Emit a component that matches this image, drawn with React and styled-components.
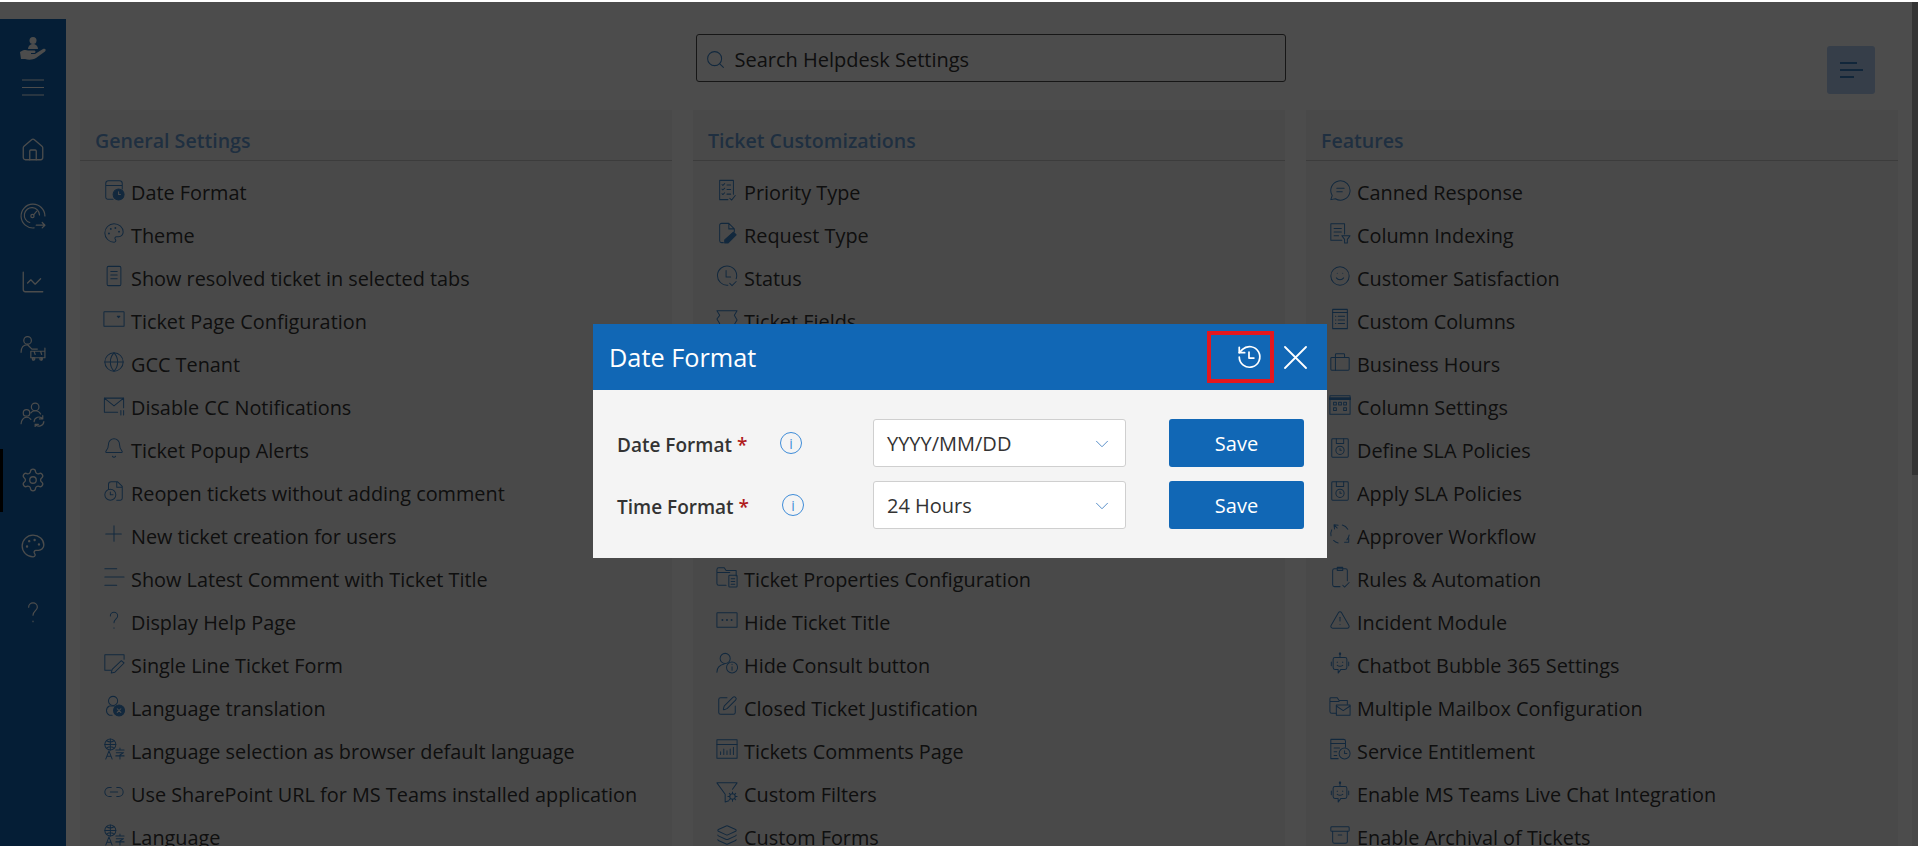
import React from "react";
import styled, { createGlobalStyle } from "styled-components";
import {
  Archive,
  Bell,
  ChartLine,
  ChevronDown,
  Globe,
  Home,
  Layers,
  Link2,
  Palette,
  Search,
  Settings,
  Smile,
  SquarePen,
  TriangleAlert,
} from "lucide-react";

const PRIMARY = "#1167b5";
const ICON_BLUE = "#3d86cc";

const Svg = ({ children, size = 22, sw = 1.1 }) => (
  <svg width={size} height={size} viewBox="0 0 24 24" fill="none" stroke="currentColor" strokeWidth={sw} strokeLinecap="round" strokeLinejoin="round">
    {children}
  </svg>
);

const DateIcon = () => (
  <Svg>
    <path d="M11 22H5a2 2 0 0 1-2-2V5a3 3 0 0 1 3-3h12a3 3 0 0 1 3 3v6M3 7h18" />
    <circle cx="17" cy="17" r="6" fill="currentColor" />
    <path d="M17 14v3h2" stroke="#fff" />
  </Svg>
);
const DocLines = () => (
  <Svg>
    <rect x="4.5" y="1.5" width="15" height="21" rx="1.5" />
    <path d="M8.5 7h7M8.5 11h7M8.5 15h7" />
  </Svg>
);
const PageConfig = () => (
  <Svg>
    <rect x="1" y="4" width="22" height="16" rx="0.5" />
    <path d="M15.5 9h3l-1.5 1.5z" fill="currentColor" />
  </Svg>
);
const MailPause = () => (
  <Svg>
    <path d="M16 20H1.5V4.5h21V15M1.5 4.5 12 13l10.5-8.5" />
    <path d="M19.5 18v5M22.5 18v5" />
  </Svg>
);
const FileLoop = () => (
  <Svg>
    <path d="M6 10V5a3 3 0 0 1 3-3h7l5 5v13a2 2 0 0 1-2 2h-4M15 2v6h6" />
    <circle cx="8" cy="16" r="6" />
    <path d="M8 13v3h3" />
  </Svg>
);
const ThinPlus = () => (
  <Svg>
    <path d="M12 3v17M3 12h17" />
  </Svg>
);
const LeftLines = () => (
  <Svg>
    <path d="M2 3h13M2 12h21M2 21h13" />
  </Svg>
);
const Question = ({ size = 22 }) => (
  <Svg size={size}>
    <path d="M8 7.5a4 4 0 0 1 8 0c0 3-4 3.5-4 7.5M12 20.5v.5" />
  </Svg>
);
const NotePen = () => (
  <Svg>
    <path d="M9 20H2V3h21v5" />
    <path d="M20 9.5 23 12 13 22l-4 1 1-4z" />
  </Svg>
);
const UserBadge = () => (
  <Svg>
    <circle cx="11" cy="6.5" r="5" />
    <path d="M10 22H7a5.5 5.5 0 0 1 0-10h6" />
    <circle cx="17.5" cy="17" r="6" fill="currentColor" />
    <path d="m15.5 15 4 4M19.5 15l-4 4" stroke="#fff" />
  </Svg>
);
const GlobeTranslate = () => (
  <Svg>
    <circle cx="8" cy="7" r="6" />
    <path d="M2 7h12M8 1v12M4 3c3 2 5 2 8 0M4 11c3-2 5-2 8 0" />
    <path d="m3 23 3.500-9 3.500 9M4.500 20h4" />
    <path d="M14 13h9M18.500 11v2M14.500 16h8l-4 2.500M14 19.500h9M18.500 18.500V23" />
  </Svg>
);
const Checklist = () => (
  <Svg>
    <path d="M13 22.5H4v-21h15v15" />
    <path d="m6.5 6 1 1 2-2M6.5 11l1 1 2-2M6.5 16l1 1 2-2M12 6.5h4M12 11.5h4M12 16.5h4M15 21l2 2 4-5" />
  </Svg>
);
const FileEdit = () => (
  <Svg>
    <path d="M8 22.5H6a2 2 0 0 1-2-2V3.500a2 2 0 0 1 2-2h8l6 6v3M14 1.500v6h6" />
    <path d="m19 11 3 3-9 9H9.500v-3.500z" fill="currentColor" />
  </Svg>
);
const ClockDone = () => (
  <Svg>
    <path d="M13 22a10.500 10.500 0 1 1 9-7" />
    <path d="M11 6v7h5M15 20l2.500 2.500L22 18" />
  </Svg>
);
const TicketShape = () => (
  <Svg>
    <path d="M1 3h22l-3 5 3 5-3 5 3 4H1l3-5-3-5 3-4z" />
  </Svg>
);
const FolderDoc = () => (
  <Svg>
    <path d="M11 21H3a2 2 0 0 1-2-2V4a2 2 0 0 1 2-2h6l2 3h11v6M1 7h14" />
    <rect x="14" y="10" width="9" height="13" rx="1" />
    <path d="M16.500 14h4M16.500 17h4M16.500 20h4" />
  </Svg>
);
const DotsBox = () => (
  <Svg>
    <rect x="1" y="4" width="22" height="16" rx="0.5" />
    <path d="M7 12v.01M12 12v.01M17 12v.01" strokeWidth="2.200" />
  </Svg>
);
const UserInfo = () => (
  <Svg>
    <circle cx="10" cy="7" r="5.500" />
    <path d="M1 22c0-5 3-8 8-9" />
    <circle cx="17.500" cy="17" r="6" />
    <path d="M17.500 16v4M17.500 13.500v.2" />
  </Svg>
);
const ChartWindow = () => (
  <Svg>
    <rect x="1" y="2" width="22" height="20" />
    <path d="M1 7h22M5 18v-3M8.500 18v-6M12 18v-4M15.500 18v-6M19 18v-8" />
  </Svg>
);
const FilterGear = () => (
  <Svg>
    <path d="M14 21.500 10 23v-8.500L1 2h22l-5 7" />
    <circle cx="18" cy="17" r="3" />
    <path d="M18 12v2M18 20v2M13 17h2M21 17h2M14.500 13.500l1.500 1.500M20 19l1.500 1.500M21.500 13.500 20 15M16 19l-1.500 1.500" />
  </Svg>
);
const Bubble = () => (
  <Svg>
    <path d="M2 22.500 3.500 18A10.500 10.500 0 1 1 7 21.500z" />
    <path d="M8.500 10h8M8.500 14h6" />
  </Svg>
);
const DocFilter = () => (
  <Svg>
    <path d="M14 20H2V2h15v11" />
    <path d="M5.500 7h8M5.500 11h8M5.500 15h5" />
    <path d="M14 15h9l-3 4v4h-3v-4z" />
  </Svg>
);
const DotDoc = () => (
  <Svg>
    <rect x="4" y="1.500" width="16" height="21" />
    <path d="M4 5h16M7 9h.5M10 9h7M7 13h.5M10 13h7M7 17h.5M10 17h7" />
  </Svg>
);
const Case = () => (
  <Svg>
    <rect x="2" y="7" width="20" height="14" rx="1" />
    <path d="M7 21V7M7 7V4a1 1 0 0 1 1-1h8a1 1 0 0 1 1 1v3" />
  </Svg>
);
const GridTable = () => (
  <Svg>
    <rect x="1" y="2" width="22" height="20" />
    <path d="M1 5h22" strokeWidth="3" />
    <path d="M5 9h3v3H5zM10.500 9h3v3h-3zM16 9h3v3h-3zM5 15h3v3H5zM16 15h3v3h-3z" />
  </Svg>
);
const SaveClock = () => (
  <Svg>
    <rect x="3" y="2" width="18" height="20" rx="1" />
    <path d="M8 2v5h8V2" />
    <circle cx="12" cy="14.500" r="4.500" />
    <path d="M12 12.500v2h1.500" />
  </Svg>
);
const DashedLoop = () => (
  <Svg>
    <path d="M14.500 2.300a10 10 0 0 1 6 4.500M22 13a10 10 0 0 1-2.500 5.500M10 21.800a10 10 0 0 1-5-2.800M2.200 14a10 10 0 0 1 .8-6.500" />
    <path d="M10 2.500 5.500 2l.5 4.500M5.500 2 9 5.500M17 21l4.500 0 0-4" />
  </Svg>
);
const ClipCheck = () => (
  <Svg>
    <path d="M12 22.500H6a2 2 0 0 1-2-2V5a2 2 0 0 1 2-2h12a2 2 0 0 1 2 2v11" />
    <path d="M9 5V1.500h6V5zM15 21l2 2 5-5" />
  </Svg>
);
const BotIcon = () => (
  <Svg>
    <path d="M12 1v5" />
    <circle cx="12" cy="2" r="0.800" fill="currentColor" />
    <path d="M6.500 6h11a2 2 0 0 1 2 2v9a2 2 0 0 1-2 2H13l-3 4v-4H6.500a2 2 0 0 1-2-2V8a2 2 0 0 1 2-2z" />
    <path d="M2.500 11v4M21.500 11v4M9 11v.5M15 11v.5M9 14.500c2 1.500 4 1.500 6 0" />
  </Svg>
);
const FolderMail = () => (
  <Svg>
    <path d="M8 20H3a2 2 0 0 1-2-2V4a1 1 0 0 1 1-1h7l2 3h9v4M1 7h10" />
    <rect x="8" y="11" width="15" height="11" />
    <path d="m8 12 7.500 5 7.500-5" />
  </Svg>
);
const DocClock = () => (
  <Svg>
    <path d="M10 22.500H2v-21h14a2 2 0 0 1 2 2V10" />
    <path d="M2 6h16M5.500 11h6M5.500 15h3M5.500 19h3" />
    <circle cx="17" cy="17" r="6" />
    <path d="M17 14v3h2.500" />
  </Svg>
);

const LogoIcon = () => (
  <svg width="27" height="26" viewBox="0 0 27 26" fill="currentColor">
    <circle cx="13" cy="4.500" r="3.500" />
    <path d="M8 13a5 5 0 0 1 10 0z" />
    <path d="M0 16c3-2.500 6-2.500 8-1.500h6c2 0 2 2.500 0 2.500h-3v1h4l8-5c2.500-1 3.500 1 2 2.500L16 22c-3 2-8 2-11 1H1z" />
  </svg>
);
const BurgerIcon = () => (
  <svg width="22" height="17" viewBox="0 0 22 17" stroke="currentColor" strokeWidth="1.100">
    <path d="M0 1h22M0 8.500h22M0 16h22" />
  </svg>
);
const GaugeIcon = () => (
  <Svg size={26}>
    <path d="M13 23A11 11 0 1 1 23 12" />
    <path d="M9 18a7 7 0 1 1 9-7" />
    <circle cx="11.500" cy="12" r="1.500" />
    <path d="m12.500 11 3-3.500M15 20.500h8M20.500 18l2.500 2.500-2.500 2.500" />
  </Svg>
);
const UserTrain = () => (
  <Svg size={26}>
    <circle cx="7" cy="5" r="3.500" />
    <path d="M1 16c0-4 2-7 6-7l4 4h5" />
    <path d="M10 15h13v6H10zM23 12v9M12 21v2M20 21v2M13 15l1 3M19 15l1 3" />
    <circle cx="12.500" cy="22" r="1.200" />
    <circle cx="19.500" cy="22" r="1.200" />
  </Svg>
);
const UsersRefresh = () => (
  <Svg size={26}>
    <circle cx="14" cy="5.500" r="3.500" />
    <circle cx="6" cy="11" r="3" />
    <path d="M1 21c0-3 2-6 5-6s3 1 4 2M10 11c1-1.500 2-2 4-2s4 1 5 3" />
    <path d="M13 19a4.500 4.500 0 0 1 8-2.500M22 19a4.500 4.500 0 0 1-8 2.500M21 13.500v3h-3M14 24v-2.500h3" />
  </Svg>
);

const NAV = [
  { icon: <Home size={26} strokeWidth={1.2} /> },
  { icon: <GaugeIcon /> },
  { icon: <ChartLine size={26} strokeWidth={1.2} /> },
  { icon: <UserTrain /> },
  { icon: <UsersRefresh /> },
  { icon: <Settings size={26} strokeWidth={1.2} />, active: true },
  { icon: <Palette size={26} strokeWidth={1.2} /> },
  { icon: <Question size={26} /> },
];

const lu = (Icon) => <Icon size={22} strokeWidth={1.1} />;

const GENERAL = [
  [<DateIcon />, "Date Format"],
  [lu(Palette), "Theme"],
  [<DocLines />, "Show resolved ticket in selected tabs"],
  [<PageConfig />, "Ticket Page Configuration"],
  [lu(Globe), "GCC Tenant"],
  [<MailPause />, "Disable CC Notifications"],
  [lu(Bell), "Ticket Popup Alerts"],
  [<FileLoop />, "Reopen tickets without adding comment"],
  [<ThinPlus />, "New ticket creation for users"],
  [<LeftLines />, "Show Latest Comment with Ticket Title"],
  [<Question />, "Display Help Page"],
  [<NotePen />, "Single Line Ticket Form"],
  [<UserBadge />, "Language translation"],
  [<GlobeTranslate />, "Language selection as browser default language"],
  [lu(Link2), "Use SharePoint URL for MS Teams installed application"],
  [<GlobeTranslate />, "Language"],
];

const TICKETS_TOP = [
  [<Checklist />, "Priority Type"],
  [<FileEdit />, "Request Type"],
  [<ClockDone />, "Status"],
  [<TicketShape />, "Ticket Fields"],
];

const TICKETS_BOTTOM = [
  [<FolderDoc />, "Ticket Properties Configuration"],
  [<DotsBox />, "Hide Ticket Title"],
  [<UserInfo />, "Hide Consult button"],
  [lu(SquarePen), "Closed Ticket Justification"],
  [<ChartWindow />, "Tickets Comments Page"],
  [<FilterGear />, "Custom Filters"],
  [lu(Layers), "Custom Forms"],
];

const FEATURES = [
  [<Bubble />, "Canned Response"],
  [<DocFilter />, "Column Indexing"],
  [lu(Smile), "Customer Satisfaction"],
  [<DotDoc />, "Custom Columns"],
  [<Case />, "Business Hours"],
  [<GridTable />, "Column Settings"],
  [<SaveClock />, "Define SLA Policies"],
  [<SaveClock />, "Apply SLA Policies"],
  [<DashedLoop />, "Approver Workflow"],
  [<ClipCheck />, "Rules & Automation"],
  [lu(TriangleAlert), "Incident Module"],
  [<BotIcon />, "Chatbot Bubble 365 Settings"],
  [<FolderMail />, "Multiple Mailbox Configuration"],
  [<DocClock />, "Service Entitlement"],
  [<BotIcon />, "Enable MS Teams Live Chat Integration"],
  [lu(Archive), "Enable Archival of Tickets"],
];

const SettingRows = ({ rows }) =>
  rows.map(([icon, label]) => (
    <Row key={label}>
      <RowIcon>{icon}</RowIcon>
      {label}
    </Row>
  ));

const FormatRow = ({ label, value, infoShift }) => (
  <FormRow>
    <FieldLabel>
      {label} <Required>*</Required>
    </FieldLabel>
    <InfoIcon $shift={infoShift}>i</InfoIcon>
    <SelectBox>
      {value}
      <ChevronDown size={22} strokeWidth={1} color="#4a86c5" />
    </SelectBox>
    <SaveButton>Save</SaveButton>
  </FormRow>
);

export default function App() {
  return (
    <>
      <GlobalStyle />
      <Screen>
        <Sidebar>
          <Logo>
            <LogoIcon />
          </Logo>
          <Burger>
            <BurgerIcon />
          </Burger>
          {NAV.map((item, i) => (
            <NavItem key={i} $active={item.active}>
              {item.icon}
            </NavItem>
          ))}
        </Sidebar>
        <Main>
          <TopBar>
            <SearchBox>
              <Search size={21} strokeWidth={1.2} color={ICON_BLUE} />
              Search Helpdesk Settings
            </SearchBox>
            <MenuButton>
              <svg width="24" height="18" viewBox="0 0 24 18" stroke={PRIMARY} strokeWidth="1.300">
                <path d="M1 2h17M1 9h23M1 16h14" />
              </svg>
            </MenuButton>
          </TopBar>
          <Columns>
            <Card>
              <CardTitle>General Settings</CardTitle>
              <CardBody>
                <SettingRows rows={GENERAL} />
              </CardBody>
            </Card>
            <Card>
              <CardTitle>Ticket Customizations</CardTitle>
              <CardBody>
                <SettingRows rows={TICKETS_TOP} />
                <CoveredRows $rows={5} />
                <SettingRows rows={TICKETS_BOTTOM} />
              </CardBody>
            </Card>
            <Card>
              <CardTitle>Features</CardTitle>
              <CardBody>
                <SettingRows rows={FEATURES} />
              </CardBody>
            </Card>
          </Columns>
        </Main>
        <ScrollRail>
          <ScrollThumb />
        </ScrollRail>
        <Backdrop />
        <Modal>
          <ModalHeader>
            <ModalTitle>Date Format</ModalTitle>
            <HistoryBox>
              <svg width="26" height="26" viewBox="0 0 24 24" fill="none" stroke="#fff" strokeWidth="1.600" strokeLinecap="round" strokeLinejoin="round">
                <path d="M3 12a9.500 9.500 0 1 0 3-7L3 8" />
                <path d="M3 3v5h5M12 7.500V13h4.500" />
              </svg>
            </HistoryBox>
            <CloseButton>
              <svg width="23" height="23" viewBox="0 0 23 23" stroke="#fff" strokeWidth="1.800" strokeLinecap="round">
                <path d="M1 1l21 21M22 1 1 22" />
              </svg>
            </CloseButton>
          </ModalHeader>
          <ModalBody>
            <FormatRow label="Date Format" value="YYYY/MM/DD" infoShift={0} />
            <FormatRow label="Time Format" value="24 Hours" infoShift={2} />
          </ModalBody>
        </Modal>
      </Screen>
    </>
  );
}

const GlobalStyle = createGlobalStyle`
  * {
    box-sizing: border-box;
  }
  html,
  body {
    margin: 0;
    padding: 0;
    background: #fff;
    overflow: hidden;
  }
  body {
    font-family: "Open Sans", "Noto Sans", sans-serif;
    font-size: 20px;
    color: #333;
  }
`;

const Screen = styled.div`
  position: relative;
  display: flex;
  height: 846px;
  padding-top: 2px;
  overflow: hidden;
  background: #fff;
`;

const Sidebar = styled.nav`
  flex: 0 0 66px;
  margin-top: 17px;
  background: ${PRIMARY};
  color: #fff;
  display: flex;
  flex-direction: column;
  align-items: center;
`;

const Logo = styled.div`
  height: 44px;
  margin-top: 8px;
  display: flex;
  align-items: center;
  justify-content: center;
`;

const Burger = styled.div`
  height: 33px;
  margin-bottom: 13px;
  display: flex;
  align-items: center;
  justify-content: center;
`;

const NavItem = styled.div`
  position: relative;
  flex: 0 0 66px;
  width: 100%;
  display: flex;
  align-items: center;
  justify-content: center;

  ${(p) =>
    p.$active &&
    `
    &::before {
      content: "";
      position: absolute;
      left: 0;
      top: 2px;
      bottom: 1px;
      width: 3px;
      background: #000;
    }
  `}
`;

const Main = styled.main`
  flex: 1;
  min-width: 0;
  padding: 0 14px;
  display: flex;
  flex-direction: column;
`;

const TopBar = styled.div`
  flex: 0 0 108px;
  padding-top: 32px;
  display: grid;
  grid-template-columns: repeat(3, 1fr);
  column-gap: 21px;
  align-items: start;
`;

const SearchBox = styled.div`
  grid-column: 2;
  width: 590px;
  height: 48px;
  margin-left: 3px;
  padding: 2px 8px 0;
  display: flex;
  align-items: center;
  gap: 9px;
  border: 1px solid #4a4a4a;
  border-radius: 3px;
  background: #fff;
  color: #333;
`;

const MenuButton = styled.div`
  grid-column: 3;
  justify-self: end;
  width: 48px;
  height: 48px;
  margin: 12px 23px 0 0;
  display: flex;
  align-items: center;
  justify-content: center;
  border-radius: 3px;
  background: #b4cff3;
`;

const Columns = styled.div`
  flex: 1;
  min-height: 0;
  display: grid;
  grid-template-columns: repeat(3, 1fr);
  column-gap: 21px;
`;

const Card = styled.section`
  background: #f6f6f6;
  overflow: hidden;
`;

const CardTitle = styled.h2`
  height: 51px;
  margin: 0;
  padding: 18px 15px 0;
  border-bottom: 1px solid #c8c8c8;
  font-size: 19.6px;
  line-height: 26px;
  font-weight: 600;
  color: #6a9fd8;
`;

const CardBody = styled.div`
  padding-top: 10px;
`;

const Row = styled.div`
  height: 43px;
  padding-left: 22px;
  display: flex;
  align-items: center;
  gap: 6px;
  font-size: 19.85px;
  color: #333;
  white-space: nowrap;
`;

const RowIcon = styled.span`
  flex: 0 0 23px;
  height: 22px;
  margin-bottom: 5px;
  display: flex;
  align-items: center;
  justify-content: center;
  color: ${ICON_BLUE};
`;

const CoveredRows = styled.div`
  height: ${(p) => p.$rows * 43}px;
`;

const ScrollRail = styled.div`
  flex: 0 0 6px;
  background: #f1f1f1;
`;

const ScrollThumb = styled.div`
  height: 473px;
  background: #b0b0b0;
`;

const Backdrop = styled.div`
  position: absolute;
  inset: 2px 0 0 0;
  background: rgba(0, 0, 0, 0.7);
`;

const Modal = styled.div`
  position: absolute;
  left: 593px;
  top: 324px;
  width: 734px;
  height: 234px;
  background: #f4f4f4;
`;

const ModalHeader = styled.header`
  height: 66px;
  padding: 0 20px 0 16px;
  display: flex;
  align-items: center;
  background: ${PRIMARY};
`;

const ModalTitle = styled.h1`
  flex: 1;
  margin: 0;
  font-size: 25.3px;
  font-weight: 400;
  color: #fff;
`;

const HistoryBox = styled.div`
  width: 67px;
  height: 52px;
  padding-left: 16px;
  display: flex;
  align-items: center;
  justify-content: center;
  border: 4px solid #e3171f;
`;

const CloseButton = styled.div`
  margin-left: 10px;
  display: flex;
`;

const ModalBody = styled.div`
  padding: 29px 23px 0 24px;
  display: flex;
  flex-direction: column;
  gap: 14px;
`;

const FormRow = styled.div`
  height: 48px;
  display: flex;
  align-items: center;
`;

const FieldLabel = styled.label`
  flex: 0 0 160px;
  padding-top: 3px;
  font-size: 19px;
  font-weight: 600;
  color: #333;
  white-space: nowrap;
`;

const Required = styled.span`
  color: #b01c1c;
`;

const InfoIcon = styled.span`
  flex: 0 0 22px;
  height: 22px;
  margin-left: ${(p) => 3 + p.$shift}px;
  margin-right: ${(p) => 71 - p.$shift}px;
  display: flex;
  align-items: center;
  justify-content: center;
  border: 1px solid #3f8cd8;
  border-radius: 50%;
  font-size: 14px;
  color: #3f8cd8;
`;

const SelectBox = styled.div`
  flex: 0 0 253px;
  height: 48px;
  padding: 1px 12px 0 13px;
  display: flex;
  align-items: center;
  justify-content: space-between;
  border: 1px solid #cfcfcf;
  border-radius: 3px;
  background: #fff;
  color: #333;
`;

const SaveButton = styled.button`
  flex: 0 0 135px;
  height: 48px;
  margin-left: 43px;
  border: 0;
  border-radius: 3px;
  background: ${PRIMARY};
  font-family: inherit;
  font-size: 20px;
  color: #fff;
`;
